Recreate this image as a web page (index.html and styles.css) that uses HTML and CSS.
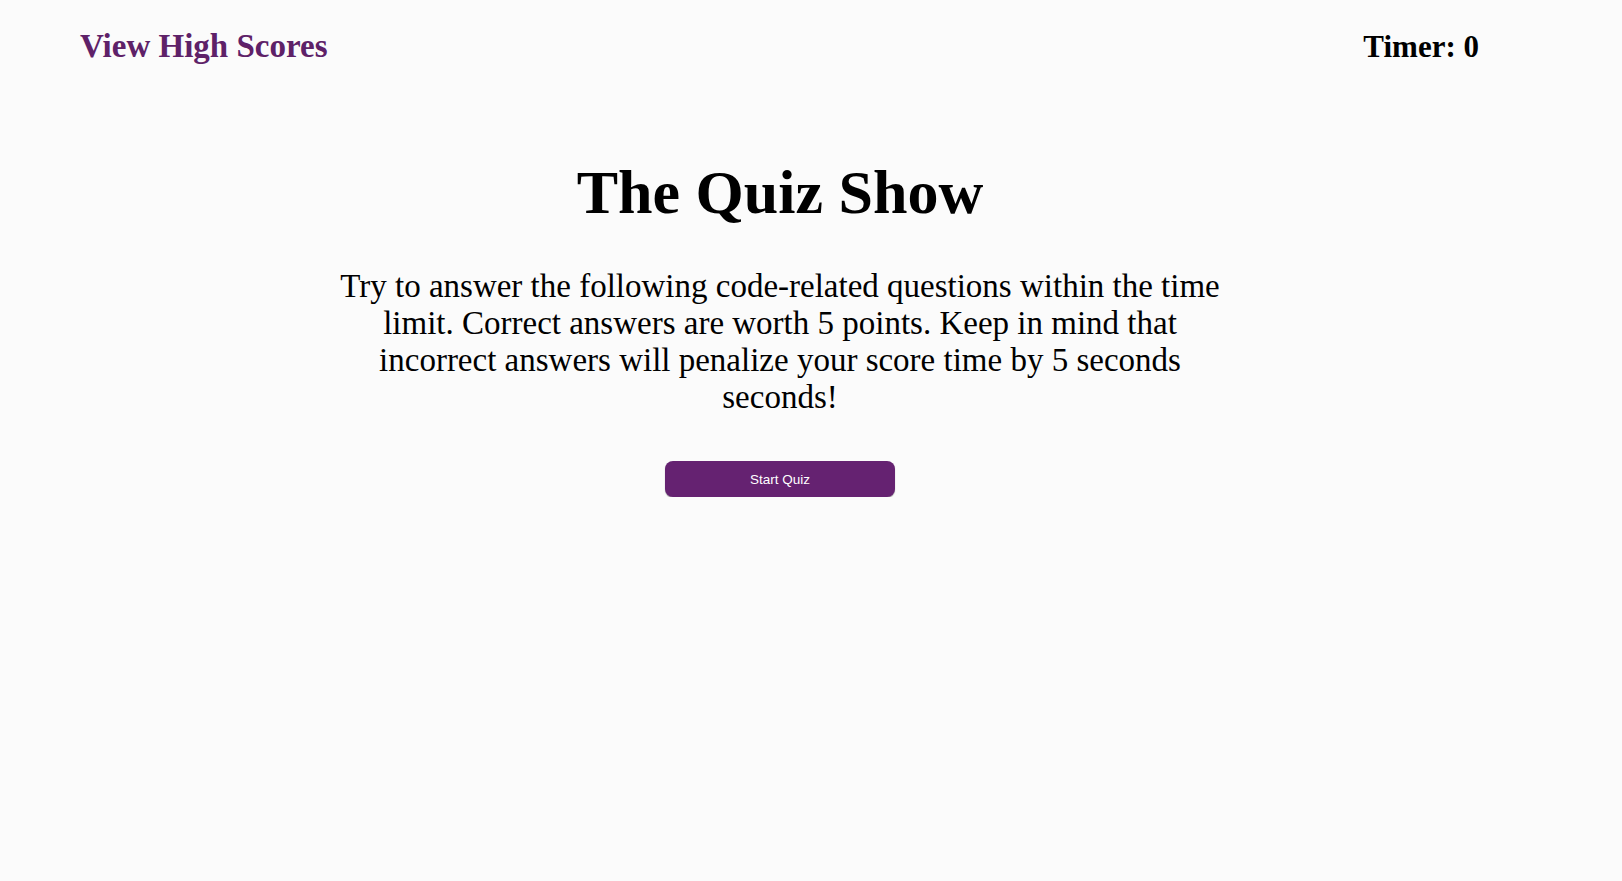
FILE: index.html
```html
<!DOCTYPE html>
<html lang="en">
<head>
<meta charset="utf-8">
<title>The Quiz Show</title>
<link rel="stylesheet" href="styles.css">
</head>
<body>
<div class="page">
  <header class="topbar">
    <a class="scores-link" href="#">View High Scores</a>
    <div class="timer">Timer: <span>0</span></div>
  </header>
  <main class="intro">
    <h1 class="title">The Quiz Show</h1>
    <p class="lead">Try to answer the following code-related questions within the time limit. Correct answers are worth 5 points. Keep in mind that incorrect answers will penalize your score time by 5 seconds seconds!</p>
    <button class="start-btn" type="button">Start Quiz</button>
  </main>
</div>
</body>
</html>
```

FILE: styles.css
```css
html, body {
  margin: 0;
  padding: 0;
  background: #fbfbfb;
}

body {
  font-family: "Liberation Serif", "Times New Roman", serif;
  color: #000;
}

.page {
  width: 1560px;
}

.topbar {
  display: flex;
  justify-content: space-between;
  align-items: baseline;
  padding: 28px 81px 0 80px;
  font-size: 33px;
  line-height: 37px;
  font-weight: bold;
}

.scores-link {
  color: #5e2168;
  text-decoration: none;
}

.timer {
  color: #000;
  font-size: 31px;
}

.intro {
  display: flex;
  flex-direction: column;
  align-items: center;
  text-align: center;
}

.title {
  margin: 91px 0 0;
  font-size: 62px;
  line-height: 72px;
  font-weight: bold;
}

.lead {
  width: 900px;
  margin: 40px 0 0;
  font-size: 33px;
  line-height: 37px;
}

.start-btn {
  margin-top: 45px;
  width: 230px;
  height: 36px;
  border: none;
  border-radius: 8px;
  background: #652271;
  color: #fff;
  font-family: "Liberation Sans", Arial, sans-serif;
  font-size: 13.5px;
  box-shadow: 0 1px 1px rgba(0, 0, 0, 0.35);
  cursor: pointer;
}
```
